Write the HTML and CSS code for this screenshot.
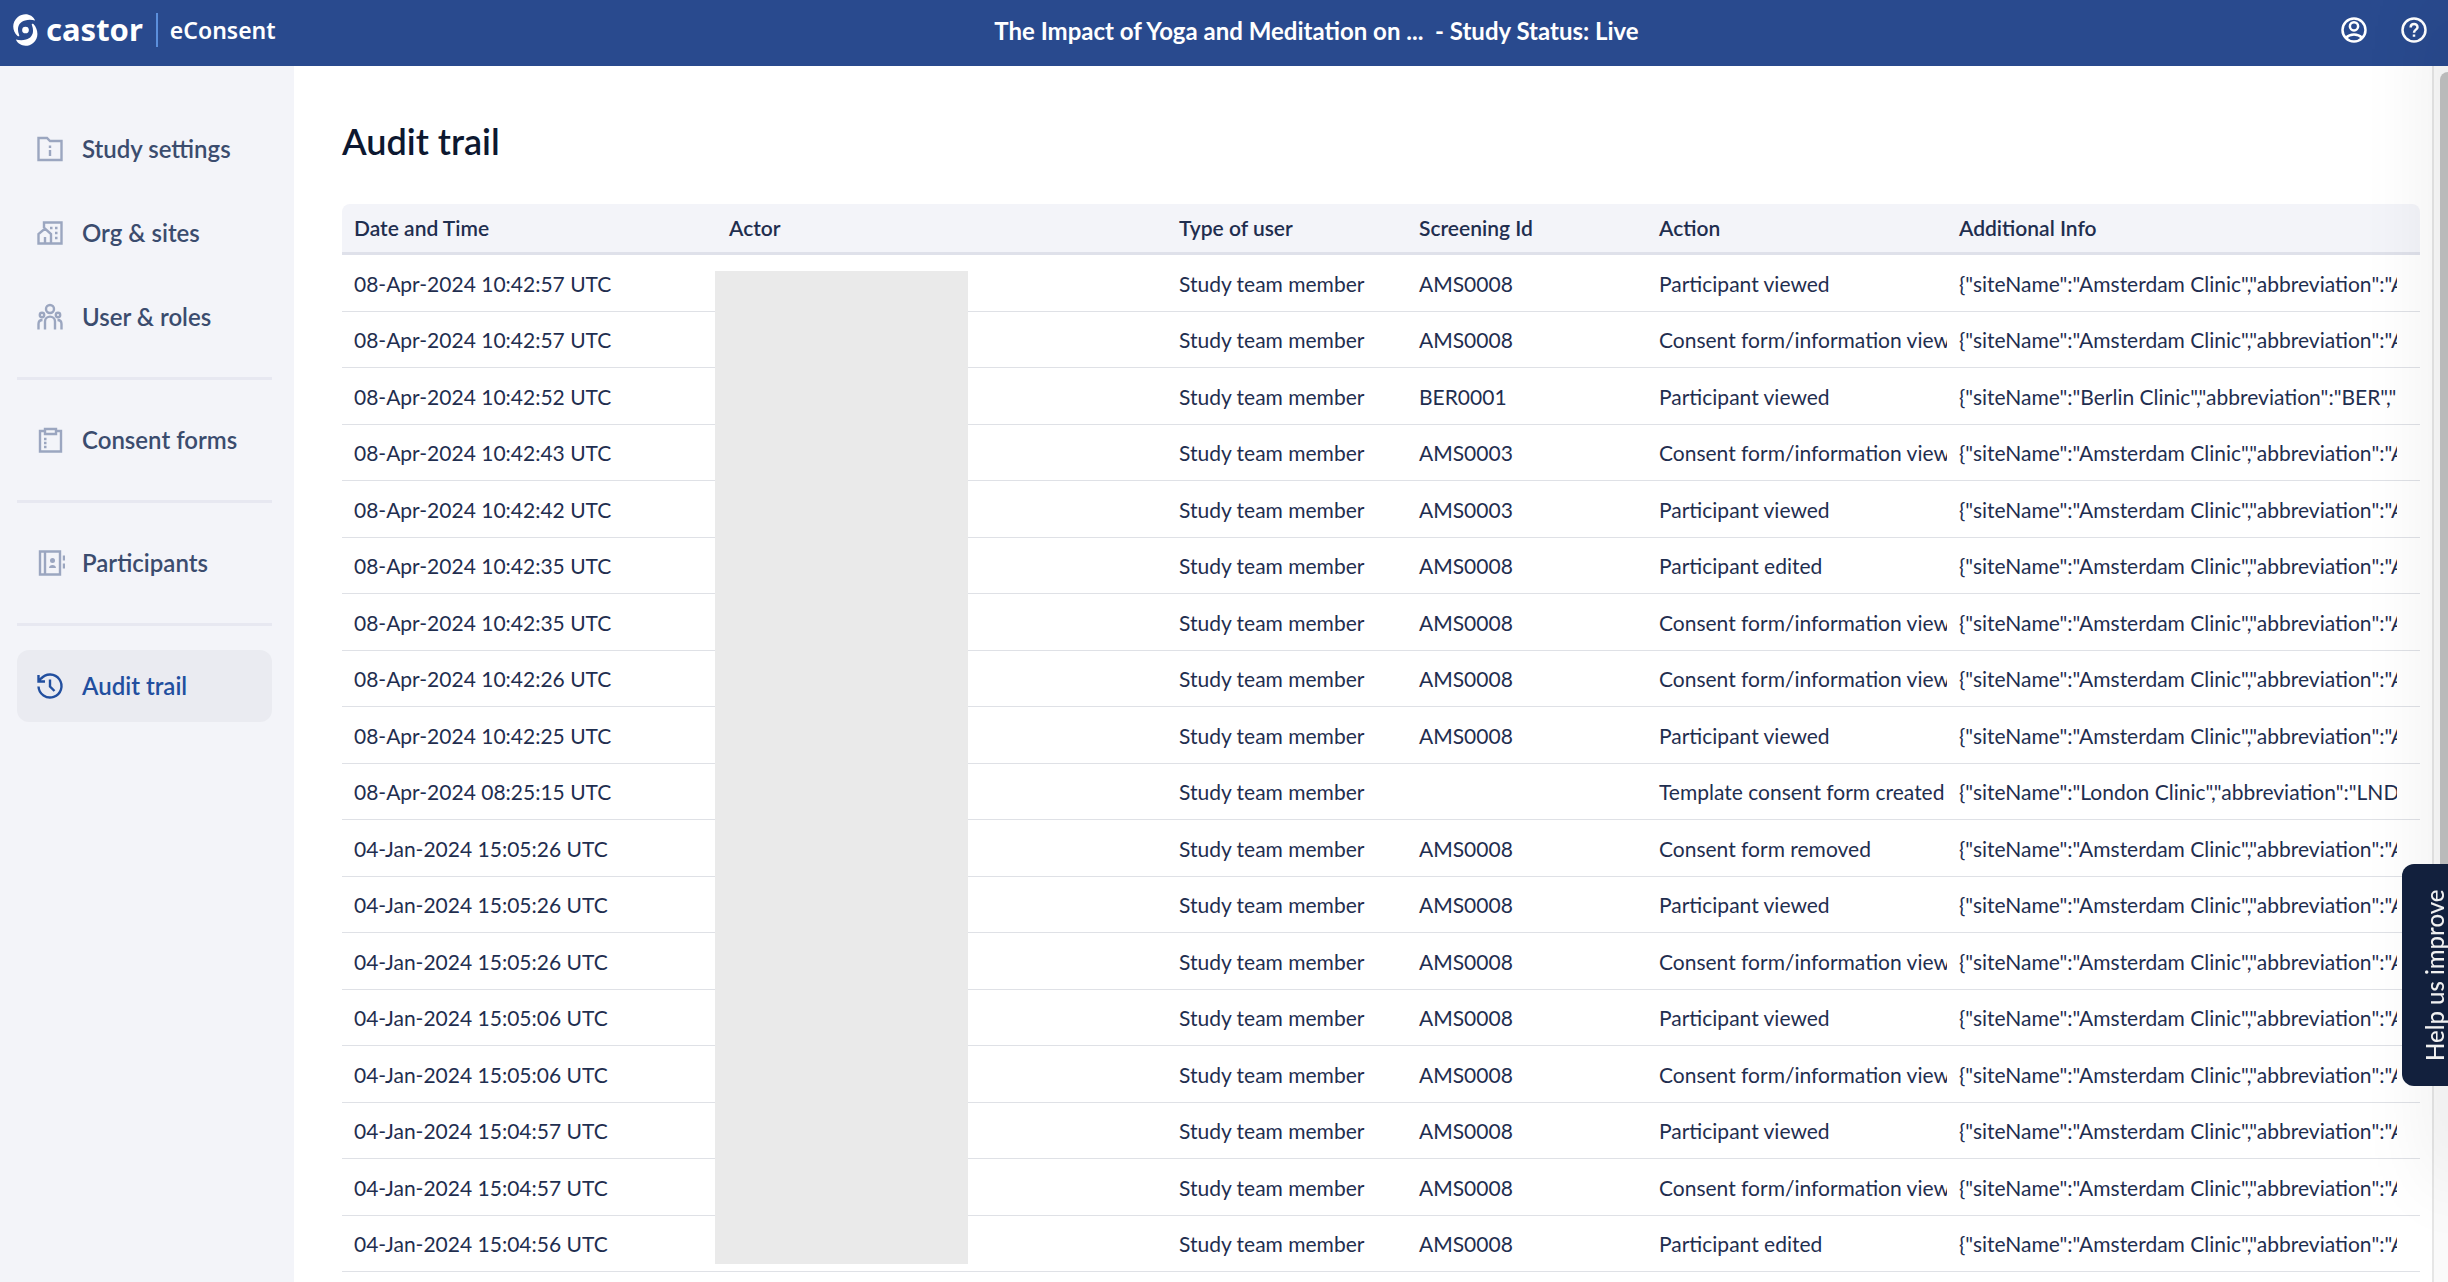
FILE: index.html
```
<!DOCTYPE html>
<html lang="en">
<head>
    <meta charset="UTF-8">
    <meta name="viewport" content="width=device-width, initial-scale=1.0">
    <title>Castor eConsent - Audit trail</title>
    <link rel="stylesheet" href="styles.css">
</head>
<body>

<header class="topbar">
    <a class="brand" href="#">
        <svg class="brand-mark" viewBox="0 0 26 34" aria-hidden="true">
            <path d="M23 7C20 0 11-1.500 5 3.500C-1.500 9-1 18 4.500 23C6 24 7 23.500 6.300 22C3.500 15 6 8.500 12.500 7C16 6 20 6.300 23 7Z"/>
            <path d="M3 27C6 34 15 35.500 21 30.500C27.500 25 26 16 21.500 11C20 10 19 10.500 19.700 12C22.500 19 20 25.500 13.500 27C10 28 6 27.700 3 27Z"/>
            <circle cx="13" cy="17" r="3.500"/>
        </svg>
        <span class="brand-name">castor</span>
        <span class="product-name">eConsent</span>
    </a>
    <div class="study-title">The Impact of Yoga and Meditation on ... &nbsp;- Study Status: Live</div>
    <div class="topbar-actions">
        <button type="button" class="icon-button" aria-label="Account">
            <svg class="icon" viewBox="0 0 24 24"><circle cx="12" cy="12" r="9.200"/><circle cx="12" cy="9" r="3.300"/><path d="M5.500 18.300C9 14.800 15 14.800 18.500 18.300"/></svg>
        </button>
        <button type="button" class="icon-button" aria-label="Help">
            <svg class="icon" viewBox="0 0 24 24"><circle cx="12" cy="12" r="9.200"/><path d="M9.300 10C9.300 6.300 14.800 6.300 14.800 9.700C14.800 11.700 12 11.800 12 14.200M12 15.600V17.400"/></svg>
        </button>
    </div>
</header>

<div class="layout">
    <nav class="sidebar">
        <a class="nav-item" href="#">
            <svg class="icon" viewBox="0 0 30 30"><path d="M3.500 4H12L15 7H26.500V26H3.500ZM15 11.500V14M15 16V22"/></svg>
            Study settings
        </a>
        <a class="nav-item" href="#">
            <svg class="icon" viewBox="0 0 30 30"><path d="M9 10V4.500H26.500V25.500H3.500V16L10 10.500L16 16V25.500M10 25.500V19M15 10H17.500M20 10H22.500M20 15H22.500M20 20H22.500"/></svg>
            Org &amp; sites
        </a>
        <a class="nav-item" href="#">
            <svg class="icon" viewBox="0 0 30 30"><circle cx="15" cy="7" r="4"/><circle cx="7" cy="13" r="2.200"/><circle cx="23" cy="13" r="2.200"/><path d="M10 27.500V19.500C10 13 20 13 20 19.500V27.500M3.500 27.500V22C3.500 19.500 5 18 7.500 18M26.500 27.500V22C26.500 19.500 25 18 22.500 18"/></svg>
            User &amp; roles
        </a>
        <hr class="nav-divider">
        <a class="nav-item" href="#">
            <svg class="icon" viewBox="0 0 30 30"><path d="M10 6H5V26.500H26V6H21M10 4H21V9H10ZM9 14H11.500M9 18H11.500M9 22H11.500"/></svg>
            Consent forms
        </a>
        <hr class="nav-divider">
        <a class="nav-item" href="#">
            <svg class="icon" viewBox="0 0 30 30"><path d="M5 3.500H25V26.500H5ZM10 3.500V26.500M29 7.500V12.500M29 15.500V20.500"/><circle class="solid" cx="17.500" cy="12.500" r="2.500"/><path class="solid" d="M14 20C14 16 21 16 21 20Z"/></svg>
            Participants
        </a>
        <hr class="nav-divider">
        <a class="nav-item active" href="#" aria-current="page">
            <svg class="icon" viewBox="0 0 30 30"><path d="M3.500 15.500A11.500 11.500 0 1 0 6 7.800M3.500 4V10.500H10M4 9.500L7 6.500M15 8.500V15.500L19.500 20"/></svg>
            Audit trail
        </a>
    </nav>

    <main class="content">
        <h1>Audit trail</h1>

        <div class="table-wrap">
            <table class="audit-table">
                <colgroup>
                    <col class="col-date">
                    <col class="col-actor">
                    <col class="col-type">
                    <col class="col-screening">
                    <col class="col-action">
                    <col>
                </colgroup>
                <thead>
                    <tr><th>Date and Time</th><th>Actor</th><th>Type of user</th><th>Screening Id</th><th>Action</th><th>Additional Info</th></tr>
                </thead>
                <tbody>
                    <tr><td>08-Apr-2024 10:42:57 UTC</td><td></td><td>Study team member</td><td>AMS0008</td><td>Participant viewed</td><td><div class="info">{"siteName":"Amsterdam Clinic","abbreviation":"AMS"}</div></td></tr>
                    <tr><td>08-Apr-2024 10:42:57 UTC</td><td></td><td>Study team member</td><td>AMS0008</td><td>Consent form/information viewed</td><td><div class="info">{"siteName":"Amsterdam Clinic","abbreviation":"AMS"}</div></td></tr>
                    <tr><td>08-Apr-2024 10:42:52 UTC</td><td></td><td>Study team member</td><td>BER0001</td><td>Participant viewed</td><td><div class="info">{"siteName":"Berlin Clinic","abbreviation":"BER","</div></td></tr>
                    <tr><td>08-Apr-2024 10:42:43 UTC</td><td></td><td>Study team member</td><td>AMS0003</td><td>Consent form/information viewed</td><td><div class="info">{"siteName":"Amsterdam Clinic","abbreviation":"AMS"}</div></td></tr>
                    <tr><td>08-Apr-2024 10:42:42 UTC</td><td></td><td>Study team member</td><td>AMS0003</td><td>Participant viewed</td><td><div class="info">{"siteName":"Amsterdam Clinic","abbreviation":"AMS"}</div></td></tr>
                    <tr><td>08-Apr-2024 10:42:35 UTC</td><td></td><td>Study team member</td><td>AMS0008</td><td>Participant edited</td><td><div class="info">{"siteName":"Amsterdam Clinic","abbreviation":"AMS"}</div></td></tr>
                    <tr><td>08-Apr-2024 10:42:35 UTC</td><td></td><td>Study team member</td><td>AMS0008</td><td>Consent form/information viewed</td><td><div class="info">{"siteName":"Amsterdam Clinic","abbreviation":"AMS"}</div></td></tr>
                    <tr><td>08-Apr-2024 10:42:26 UTC</td><td></td><td>Study team member</td><td>AMS0008</td><td>Consent form/information viewed</td><td><div class="info">{"siteName":"Amsterdam Clinic","abbreviation":"AMS"}</div></td></tr>
                    <tr><td>08-Apr-2024 10:42:25 UTC</td><td></td><td>Study team member</td><td>AMS0008</td><td>Participant viewed</td><td><div class="info">{"siteName":"Amsterdam Clinic","abbreviation":"AMS"}</div></td></tr>
                    <tr><td>08-Apr-2024 08:25:15 UTC</td><td></td><td>Study team member</td><td></td><td>Template consent form created</td><td><div class="info">{"siteName":"London Clinic","abbreviation":"LND"}</div></td></tr>
                    <tr><td>04-Jan-2024 15:05:26 UTC</td><td></td><td>Study team member</td><td>AMS0008</td><td>Consent form removed</td><td><div class="info">{"siteName":"Amsterdam Clinic","abbreviation":"AMS"}</div></td></tr>
                    <tr><td>04-Jan-2024 15:05:26 UTC</td><td></td><td>Study team member</td><td>AMS0008</td><td>Participant viewed</td><td><div class="info">{"siteName":"Amsterdam Clinic","abbreviation":"AMS"}</div></td></tr>
                    <tr><td>04-Jan-2024 15:05:26 UTC</td><td></td><td>Study team member</td><td>AMS0008</td><td>Consent form/information viewed</td><td><div class="info">{"siteName":"Amsterdam Clinic","abbreviation":"AMS"}</div></td></tr>
                    <tr><td>04-Jan-2024 15:05:06 UTC</td><td></td><td>Study team member</td><td>AMS0008</td><td>Participant viewed</td><td><div class="info">{"siteName":"Amsterdam Clinic","abbreviation":"AMS"}</div></td></tr>
                    <tr><td>04-Jan-2024 15:05:06 UTC</td><td></td><td>Study team member</td><td>AMS0008</td><td>Consent form/information viewed</td><td><div class="info">{"siteName":"Amsterdam Clinic","abbreviation":"AMS"}</div></td></tr>
                    <tr><td>04-Jan-2024 15:04:57 UTC</td><td></td><td>Study team member</td><td>AMS0008</td><td>Participant viewed</td><td><div class="info">{"siteName":"Amsterdam Clinic","abbreviation":"AMS"}</div></td></tr>
                    <tr><td>04-Jan-2024 15:04:57 UTC</td><td></td><td>Study team member</td><td>AMS0008</td><td>Consent form/information viewed</td><td><div class="info">{"siteName":"Amsterdam Clinic","abbreviation":"AMS"}</div></td></tr>
                    <tr><td>04-Jan-2024 15:04:56 UTC</td><td></td><td>Study team member</td><td>AMS0008</td><td>Participant edited</td><td><div class="info">{"siteName":"Amsterdam Clinic","abbreviation":"AMS"}</div></td></tr>
                </tbody>
            </table>
            <!-- Covers the actor names -->
            <div class="actor-mask"></div>
        </div>
    </main>

    <div class="scroll-track"><div class="scroll-thumb"></div></div>
</div>

<div class="edge-shadow"></div>
<button type="button" class="feedback-tab">Help us improve</button>

</body>
</html>
```
FILE: styles.css
```
* {
    box-sizing: border-box;
}
body {
    font-family: Lato, "Open Sans", sans-serif;
    font-size: 21px;
    color: #1f2e4f;
    margin: 0;
    height: 100vh;
    display: flex;
    flex-direction: column;
    overflow: hidden;
    background-color: #fff;
}
a {
    color: inherit;
    text-decoration: none;
}
button {
    font-family: inherit;
    border: none;
    cursor: pointer;
}
.icon {
    width: 30px;
    height: 30px;
    flex: none;
    fill: none;
    stroke: currentColor;
    stroke-width: 2;
}
.icon .solid {
    fill: currentColor;
    stroke: none;
}

/* Top bar */
.topbar {
    display: flex;
    align-items: center;
    height: 66px;
    flex: none;
    padding-bottom: 6px;
    background-color: #294a8e;
    color: #fff;
}
.brand {
    display: flex;
    align-items: center;
    width: 294px;
    padding-left: 13px;
    font-family: "Noto Sans", sans-serif;
    font-weight: 600;
}
.brand-mark {
    width: 25px;
    height: 34px;
    fill: #fff;
}
.brand-name {
    font-size: 31px;
    line-height: 34px;
    margin-left: 8px;
    padding-bottom: 2px;
    font-weight: 700;
}
.product-name {
    font-size: 23px;
    line-height: 34px;
    margin-left: 13px;
    padding-left: 12px;
    border-left: 2px solid #5b8fdc;
}
.study-title {
    flex: 1;
    text-align: center;
    font-size: 24px;
    font-weight: 700;
}
.topbar-actions {
    display: flex;
    gap: 30px;
    padding-right: 19px;
}
.icon-button {
    display: flex;
    padding: 0;
    background: none;
    color: #fff;
}

/* Sidebar */
.layout {
    display: flex;
    flex: 1;
    min-height: 0;
}
.sidebar {
    display: flex;
    flex-direction: column;
    gap: 12px;
    width: 294px;
    flex: none;
    padding: 47px 22px 0 17px;
    background-color: #f3f4f9;
}
.nav-item {
    display: flex;
    align-items: center;
    gap: 17px;
    height: 72px;
    padding: 0 0 1px 18px;
    border-radius: 12px;
    font-size: 24px;
    font-weight: 600;
    color: #3b4c6e;
}
.nav-item .icon {
    color: #9ba6c0;
    stroke-width: 2.4;
}
.nav-item.active {
    background-color: #eaebf1;
    color: #224f9f;
}
.nav-item.active .icon {
    color: inherit;
}
.nav-divider {
    width: 100%;
    height: 3px;
    margin: 12px 0;
    border: none;
    background-color: #e7e8f1;
}

/* Audit table */
.content {
    flex: 1;
    min-width: 0;
    padding: 53px 12px 0 48px;
}
h1 {
    margin: 0 0 41px;
    font-size: 36px;
    line-height: 44px;
    font-weight: 600;
    color: #0d1830;
}
.table-wrap {
    position: relative;
}
.audit-table {
    width: 100%;
    table-layout: fixed;
    border-collapse: separate;
    border-spacing: 0;
}
.col-date {
    width: 375px;
}
.col-actor {
    width: 450px;
}
.col-type, .col-screening {
    width: 240px;
}
.col-action {
    width: 300px;
}
th, td {
    padding: 0 0 0 12px;
    text-align: left;
    white-space: nowrap;
    overflow: hidden;
}
th {
    height: 51px;
    padding-bottom: 2px;
    font-weight: 600;
    background-color: #f3f4f9;
    border-bottom: 3px solid #dfe1ea;
}
th:first-child {
    border-top-left-radius: 8px;
}
th:last-child {
    border-top-right-radius: 8px;
}
td {
    height: 57px;
    border-bottom: 1px solid #dfe1e6;
}
tr:nth-child(even) td {
    height: 56px;
}
.info {
    margin-right: 23px;
    overflow: hidden;
}
.actor-mask {
    position: absolute;
    top: 67px;
    bottom: 8px;
    left: 373px;
    width: 253px;
    background-color: #eaeaea;
}

/* Right edge */
.scroll-track {
    width: 16px;
    flex: none;
    padding: 6px 0 0 6px;
    border-left: 2px solid #e6e6e6;
    background-color: #fafafa;
}
.scroll-thumb {
    height: 70%;
    border-radius: 8px 0 0 8px;
    background-color: #c1c1c1;
}
.edge-shadow {
    position: fixed;
    top: 0;
    bottom: 100px;
    right: -20px;
    width: 20px;
    box-shadow: 0 0 80px rgba(0, 0, 0, 0.2);
    pointer-events: none;
}
/* The tab is turned upside down, so its sides are swapped here */
.feedback-tab {
    position: fixed;
    top: 864px;
    right: 0;
    width: 46px;
    height: 222px;
    padding: 0 20px 0 0;
    border-radius: 0 12px 12px 0;
    writing-mode: vertical-rl;
    rotate: 180deg;
    background-color: #12203d;
    color: #f0f0f0;
    font-size: 24px;
    line-height: 26px;
    font-weight: 500;
}
```
